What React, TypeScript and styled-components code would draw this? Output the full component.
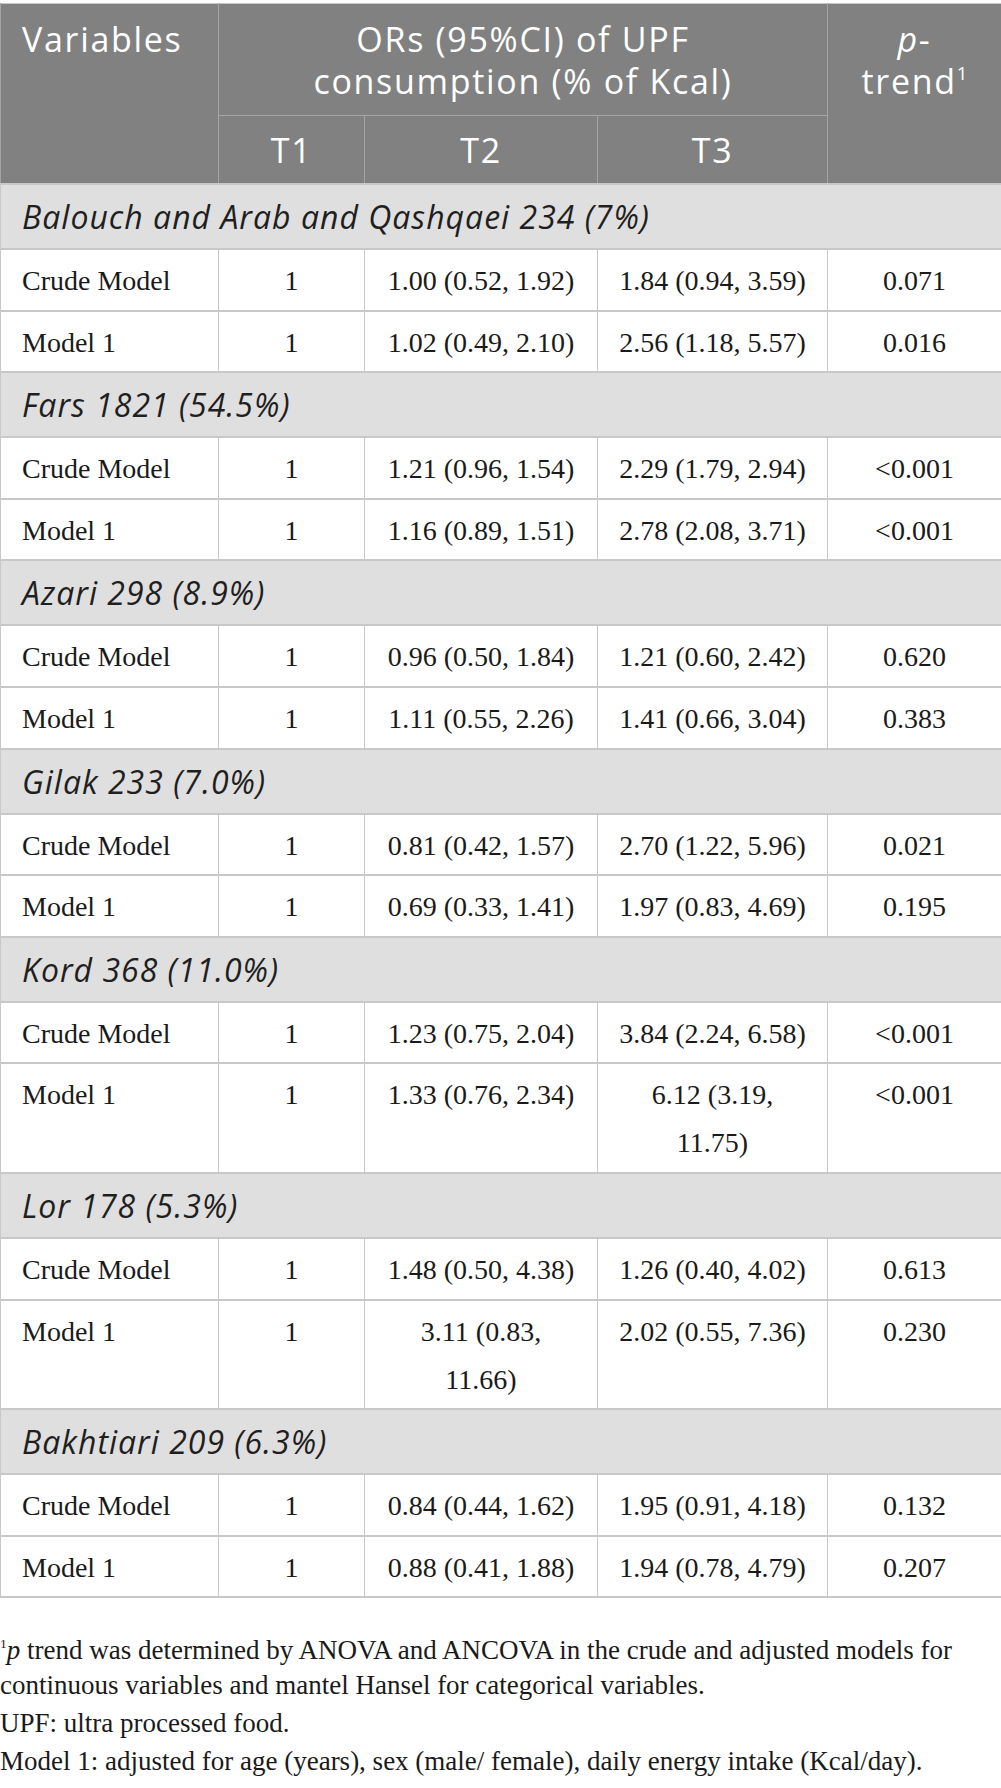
import React from "react";
import styled, { createGlobalStyle } from "styled-components";

const GlobalStyle = createGlobalStyle`
  html, body { margin: 0; padding: 0; background: #ffffff; }
  body { font-family: "Liberation Serif", "Times New Roman", serif; color: #1a1a1a; }
`;

const Page = styled.div`
  width: 1001px;
  padding-top: 3px;
`;

const Table = styled.table`
  width: 1001px;
  border-collapse: collapse;
  table-layout: fixed;
  border-top: 1px solid #c8c8c8;
`;

const HeadCell = styled.th<{ $align?: "left" | "center"; $pt?: number; $pb?: number }>`
  background: #808180;
  color: #ffffff;
  font-family: "Open Sans", "Liberation Sans", sans-serif;
  font-weight: 400;
  font-size: 34px;
  letter-spacing: 1.7px;
  line-height: 42px;
  text-align: ${(p) => p.$align ?? "center"};
  vertical-align: top;
  padding: ${(p) => p.$pt ?? 14}px 10px ${(p) => p.$pb ?? 13}px ${(p) => (p.$align === "left" ? 21 : 10)}px;
  border: 1px solid #a4a4a4;
  border-top: none;
`;

const Sup = styled.sup`
  font-size: 0.55em;
  line-height: 0;
  vertical-align: 0.75em;
  letter-spacing: 0;
`;

const GroupCell = styled.td`
  background: #e0dfe0;
  color: #1f1f1f;
  font-family: "Open Sans", "Liberation Sans", sans-serif;
  font-style: italic;
  font-size: 32px;
  letter-spacing: 1px;
  line-height: 48px;
  padding: 8px 12px 7px 21px;
  border: 2px solid #c8c8c8;
  border-left: 1px solid #c8c8c8;
  border-right: 1px solid #c8c8c8;
`;

const DataCell = styled.td<{ $first?: boolean }>`
  font-family: "Liberation Serif", "Times New Roman", serif;
  font-size: 28px;
  line-height: 48px;
  color: #1a1a1a;
  text-align: ${(p) => (p.$first ? "left" : "center")};
  vertical-align: top;
  padding: 7px ${(p) => (p.$first ? 8 : 14)}px 4.6px ${(p) => (p.$first ? 21 : 14)}px;
  border-left: 1px solid #c8c8c8;
  border-right: 1px solid #c8c8c8;
  border-top: 2px solid #c8c8c8;
  border-bottom: 2px solid #c8c8c8;
`;

const Notes = styled.div`
  margin-top: 35px;
  font-family: "Liberation Serif", "Times New Roman", serif;
  font-size: 27px;
  line-height: 35px;
  color: #1a1a1a;
`;

const NoteLine = styled.p`
  margin: 0;
  & + & {
    margin-top: 3px;
  }
`;

const NoteSup = styled.sup`
  font-size: 0.5em;
  line-height: 0;
  vertical-align: 0.8em;
`;

type Row = { label: string; t1: string; t2: string; t3: string; p: string };
type Group = { title: string; rows: Row[] };

const groups: Group[] = [
  {
    title: "Balouch and Arab and Qashqaei 234 (7%)",
    rows: [
      { label: "Crude Model", t1: "1", t2: "1.00 (0.52, 1.92)", t3: "1.84 (0.94, 3.59)", p: "0.071" },
      { label: "Model 1", t1: "1", t2: "1.02 (0.49, 2.10)", t3: "2.56 (1.18, 5.57)", p: "0.016" },
    ],
  },
  {
    title: "Fars 1821 (54.5%)",
    rows: [
      { label: "Crude Model", t1: "1", t2: "1.21 (0.96, 1.54)", t3: "2.29 (1.79, 2.94)", p: "<0.001" },
      { label: "Model 1", t1: "1", t2: "1.16 (0.89, 1.51)", t3: "2.78 (2.08, 3.71)", p: "<0.001" },
    ],
  },
  {
    title: "Azari 298 (8.9%)",
    rows: [
      { label: "Crude Model", t1: "1", t2: "0.96 (0.50, 1.84)", t3: "1.21 (0.60, 2.42)", p: "0.620" },
      { label: "Model 1", t1: "1", t2: "1.11 (0.55, 2.26)", t3: "1.41 (0.66, 3.04)", p: "0.383" },
    ],
  },
  {
    title: "Gilak 233 (7.0%)",
    rows: [
      { label: "Crude Model", t1: "1", t2: "0.81 (0.42, 1.57)", t3: "2.70 (1.22, 5.96)", p: "0.021" },
      { label: "Model 1", t1: "1", t2: "0.69 (0.33, 1.41)", t3: "1.97 (0.83, 4.69)", p: "0.195" },
    ],
  },
  {
    title: "Kord 368 (11.0%)",
    rows: [
      { label: "Crude Model", t1: "1", t2: "1.23 (0.75, 2.04)", t3: "3.84 (2.24, 6.58)", p: "<0.001" },
      { label: "Model 1", t1: "1", t2: "1.33 (0.76, 2.34)", t3: "6.12 (3.19,\n11.75)", p: "<0.001" },
    ],
  },
  {
    title: "Lor 178 (5.3%)",
    rows: [
      { label: "Crude Model", t1: "1", t2: "1.48 (0.50, 4.38)", t3: "1.26 (0.40, 4.02)", p: "0.613" },
      { label: "Model 1", t1: "1", t2: "3.11 (0.83,\n11.66)", t3: "2.02 (0.55, 7.36)", p: "0.230" },
    ],
  },
  {
    title: "Bakhtiari 209 (6.3%)",
    rows: [
      { label: "Crude Model", t1: "1", t2: "0.84 (0.44, 1.62)", t3: "1.95 (0.91, 4.18)", p: "0.132" },
      { label: "Model 1", t1: "1", t2: "0.88 (0.41, 1.88)", t3: "1.94 (0.78, 4.79)", p: "0.207" },
    ],
  },
];

const Lines: React.FC<{ text: string }> = ({ text }) => {
  const parts = text.split("\n");
  return (
    <>
      {parts.map((t, i) => (
        <React.Fragment key={i}>
          {i > 0 && <br />}
          {t}
        </React.Fragment>
      ))}
    </>
  );
};

export default function App() {
  return (
    <Page>
      <GlobalStyle />
      <Table>
        <colgroup>
          <col style={{ width: 218 }} />
          <col style={{ width: 146 }} />
          <col style={{ width: 233 }} />
          <col style={{ width: 230 }} />
          <col style={{ width: 174 }} />
        </colgroup>
        <thead>
          <tr>
            <HeadCell rowSpan={2} $align="left">
              Variables
            </HeadCell>
            <HeadCell colSpan={3}>
              ORs (95%CI) of UPF
              <br />
              consumption (% of Kcal)
            </HeadCell>
            <HeadCell rowSpan={2}>
              <i>p</i>-
              <br />
              trend<Sup>1</Sup>
            </HeadCell>
          </tr>
          <tr>
            <HeadCell $pt={13} $pb={12}>T1</HeadCell>
            <HeadCell $pt={13} $pb={12}>T2</HeadCell>
            <HeadCell $pt={13} $pb={12}>T3</HeadCell>
          </tr>
        </thead>
        <tbody>
          {groups.map((g) => (
            <React.Fragment key={g.title}>
              <tr>
                <GroupCell colSpan={5}>{g.title}</GroupCell>
              </tr>
              {g.rows.map((r) => (
                <tr key={g.title + r.label}>
                  <DataCell $first>{r.label}</DataCell>
                  <DataCell>{r.t1}</DataCell>
                  <DataCell>
                    <Lines text={r.t2} />
                  </DataCell>
                  <DataCell>
                    <Lines text={r.t3} />
                  </DataCell>
                  <DataCell>{r.p}</DataCell>
                </tr>
              ))}
            </React.Fragment>
          ))}
        </tbody>
      </Table>
      <Notes>
        <NoteLine>
          <NoteSup>1</NoteSup>
          <i>p</i> trend was determined by ANOVA and ANCOVA in the crude and adjusted models for
          <br />
          continuous variables and mantel Hansel for categorical variables.
        </NoteLine>
        <NoteLine>UPF: ultra processed food.</NoteLine>
        <NoteLine>Model 1: adjusted for age (years), sex (male/ female), daily energy intake (Kcal/day).</NoteLine>
      </Notes>
    </Page>
  );
}
